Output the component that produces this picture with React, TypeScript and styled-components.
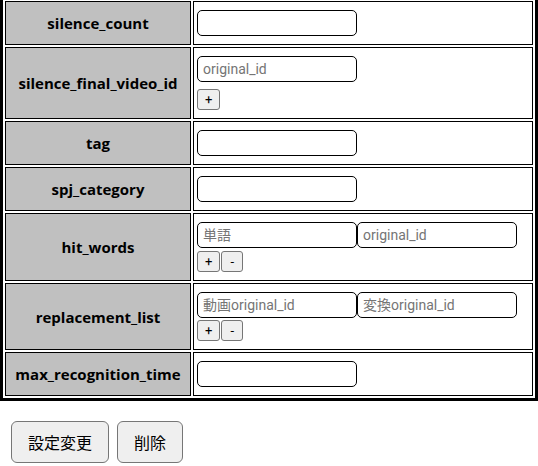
import styled, { createGlobalStyle } from "styled-components"

const GlobalStyle = createGlobalStyle`
    body {
        margin: 0;
        background: #fff;
        font-family: "Open Sans", "Noto Sans CJK JP", sans-serif;
    }
`

type Field = {
    label: string
    inputs: string[]
    buttons?: string[]
    gap?: number
}

const fields: Field[] = [
    { label: "silence_count", inputs: [""] },
    { label: "silence_final_video_id", inputs: ["original_id"], buttons: ["+"], gap: 7 },
    { label: "tag", inputs: [""] },
    { label: "spj_category", inputs: [""] },
    { label: "hit_words", inputs: ["単語", "original_id"], buttons: ["+", "-"], gap: 3 },
    { label: "replacement_list", inputs: ["動画original_id", "変換original_id"], buttons: ["+", "-"], gap: 2 },
    { label: "max_recognition_time", inputs: [""] },
]

export default function App(){
    const rows = fields.map(field => {
        return(
            <tr key={field.label}>
                <Label>{field.label}</Label>
                <Value>
                    <InputRow>
                        {field.inputs.map((ph, i) => (
                            <TextInput key={i} type="text" placeholder={ph} />
                        ))}
                    </InputRow>
                    {field.buttons && (
                        <ButtonRow $gap={field.gap ?? 3}>
                            {field.buttons.map(b => <SmallButton key={b}>{b}</SmallButton>)}
                        </ButtonRow>
                    )}
                </Value>
            </tr>
        )
    })
    return (
        <Page>
            <GlobalStyle />
            <Table>
                <tbody>{rows}</tbody>
            </Table>
            <Actions>
                <ActionButton>設定変更</ActionButton>
                <ActionButton>削除</ActionButton>
            </Actions>
        </Page>
    )
}

const Page = styled.div`
    margin-top: -4px;
`

const Table = styled.table`
    width: 538px;
    border: 3px solid #000;
    border-collapse: separate;
    border-spacing: 2px;
`

const Label = styled.th`
    width: 168px;
    padding: 0 8px;
    background: #c0c0c0;
    border: 1px solid #000;
    font-size: 15px;
    line-height: 18px;
    font-weight: 700;
    color: #000;
    text-align: center;
    vertical-align: middle;
`

const Value = styled.td`
    padding: 8px 3px;
    border: 1px solid #000;
    vertical-align: middle;
`

const InputRow = styled.div`
    display: flex;
`

const TextInput = styled.input`
    box-sizing: border-box;
    width: 160px;
    height: 26px;
    margin: 0;
    padding: 0 5px;
    border: 1px solid #000;
    border-radius: 5px;
    font-family: Roboto, "Noto Sans CJK JP", sans-serif;
    font-size: 14px;
    color: #000;
    background: #fff;

    &::placeholder {
        color: #757575;
    }
`

const ButtonRow = styled.div<{ $gap: number }>`
    display: flex;
    margin-top: ${p => p.$gap}px;
`

const SmallButton = styled.button`
    box-sizing: border-box;
    min-width: 22px;
    height: 21px;
    padding: 0 7px;
    margin: 0 1px 0 0;
    border: 1px solid #767676;
    border-radius: 3px;
    background: #efefef;
    font-family: Roboto, sans-serif;
    font-size: 13px;
    line-height: 19px;
    color: #000;
`

const Actions = styled.div`
    display: flex;
    gap: 8px;
    margin: 20px 0 0 11px;
`

const ActionButton = styled.button`
    box-sizing: border-box;
    height: 42px;
    padding: 0 16px;
    border: 1px solid #767676;
    border-radius: 6px;
    background: #efefef;
    font-family: "Noto Sans CJK JP", sans-serif;
    font-size: 16px;
    color: #000;
`
